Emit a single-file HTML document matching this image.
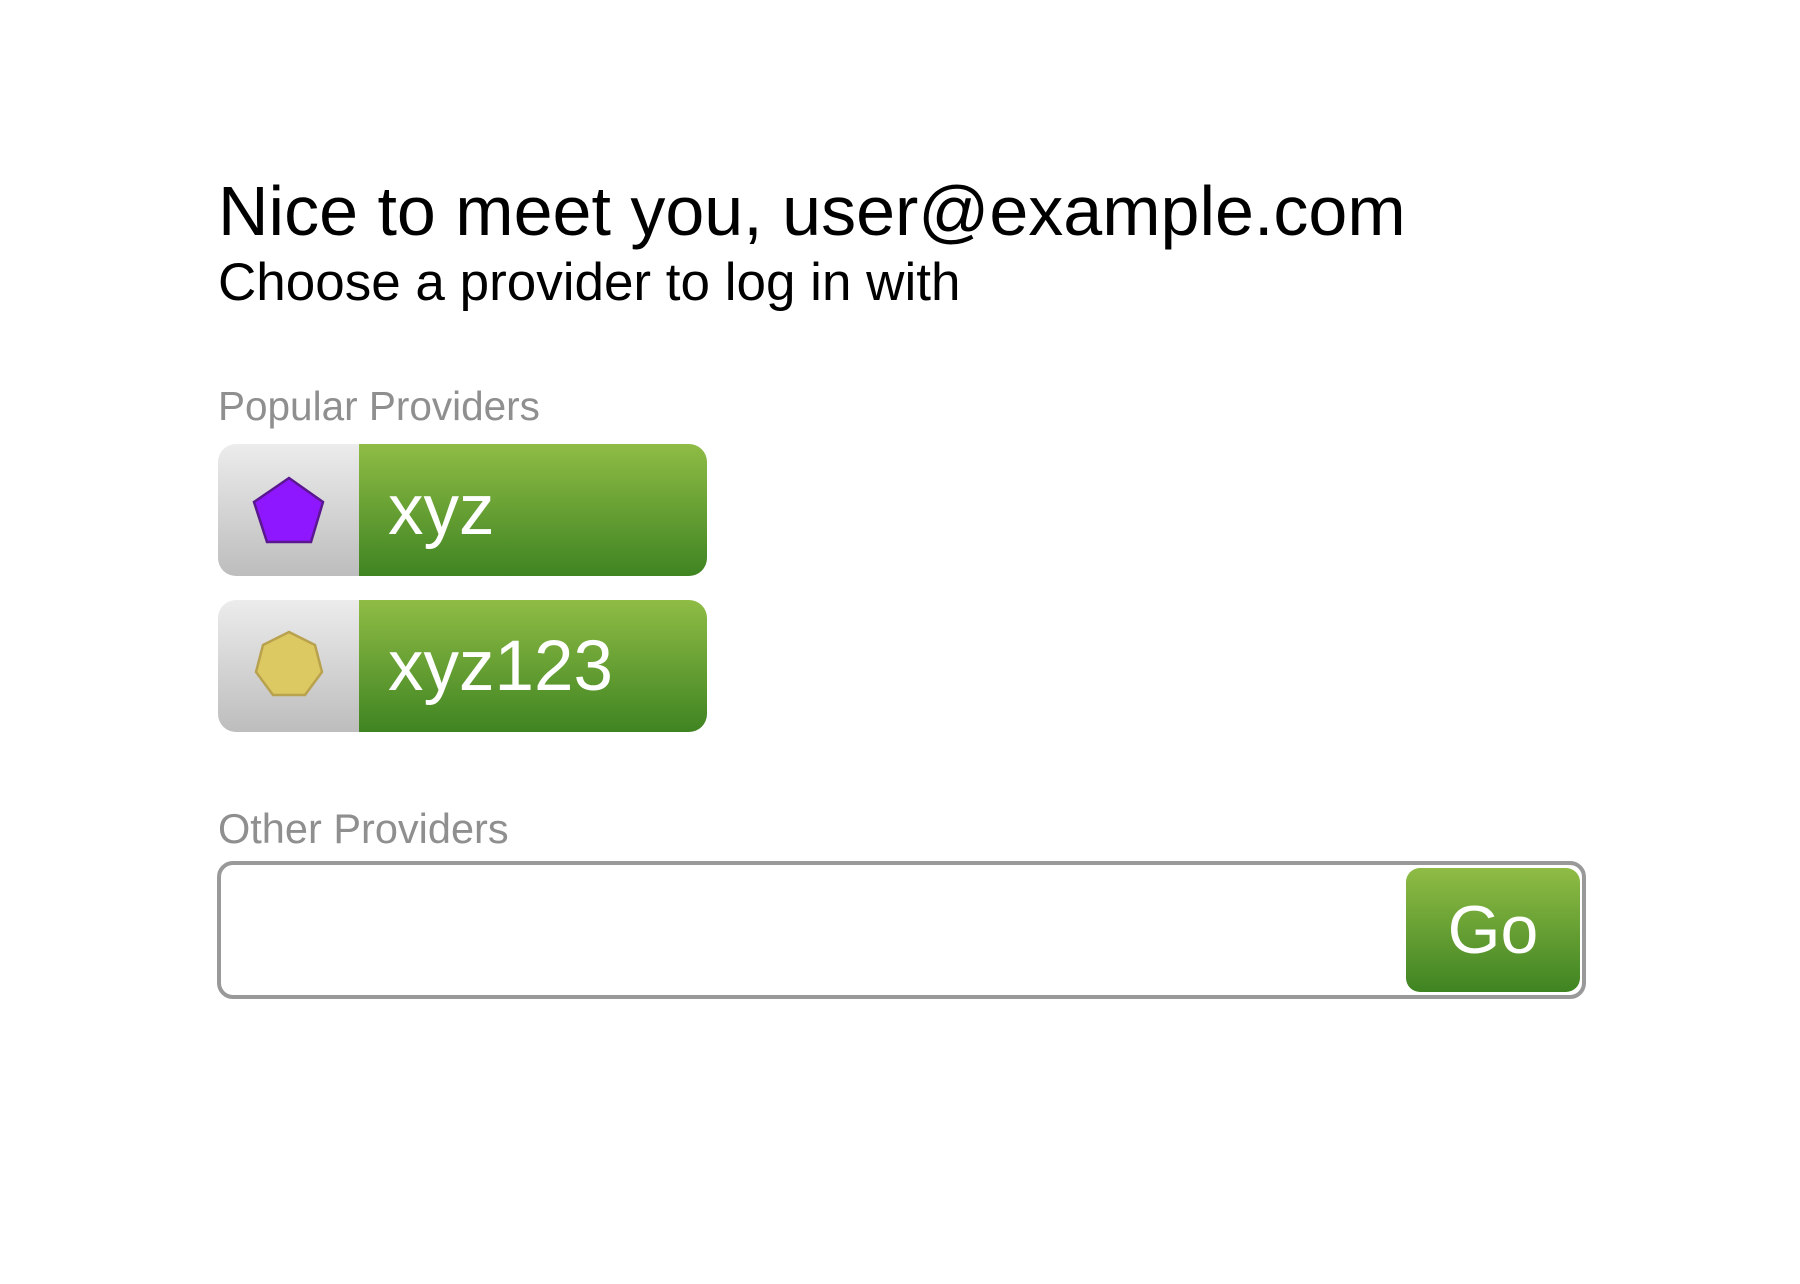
<!DOCTYPE html>
<html><head><meta charset="utf-8"><style>
body{margin:0;width:1800px;height:1284px;background:#fff;font-family:"Liberation Sans",sans-serif;position:relative;overflow:hidden}
.t{position:absolute;white-space:nowrap;line-height:1}
.h1{left:218px;top:176px;font-size:70px;color:#000}
.h2{left:218px;top:256px;font-size:53px;color:#000}
.lbl{color:#8f8f8f;left:218px}
.btn{position:absolute;left:218px;width:489px;height:132px;border-radius:18px;overflow:hidden;display:flex}
.ic{width:141px;background:linear-gradient(#ececec,#bdbdbd);display:flex;align-items:center;justify-content:center}
.gr{flex:1;background:linear-gradient(#8fbc45,#3f8422);color:#fff;font-size:71px;display:flex;align-items:center;padding-left:29px}
.box{position:absolute;left:217px;top:861px;width:1361px;height:130px;border:4px solid #999;border-radius:16px}
.go{position:absolute;right:2px;top:3px;bottom:3px;width:174px;border-radius:14px;background:linear-gradient(#8fbc45,#3f8422);color:#fff;font-size:68px;display:flex;align-items:center;justify-content:center}
</style></head><body>
<div class="t h1">Nice to meet you, user@example.com</div>
<div class="t h2">Choose a provider to log in with</div>
<div class="t lbl" style="top:386px;font-size:40.5px">Popular Providers</div>
<div class="btn" style="top:444px"><div class="ic"><svg width="80" height="80" viewBox="0 0 80 80"><polygon points="40,8 74,32 62,72 18,72 5,32" fill="#8e17ff" stroke="#5a1790" stroke-width="2.5"/></svg></div><div class="gr">xyz</div></div>
<div class="btn" style="top:600px"><div class="ic"><svg width="80" height="80" viewBox="0 0 80 80"><polygon points="40,6 66,19 73,46 56,69 24,69 7,46 14,19" fill="#dcc962" stroke="#b9a24e" stroke-width="2.5"/></svg></div><div class="gr">xyz123</div></div>
<div class="t lbl" style="top:808px;font-size:41.5px">Other Providers</div>
<div class="box"><div class="go">Go</div></div>
</body></html>
